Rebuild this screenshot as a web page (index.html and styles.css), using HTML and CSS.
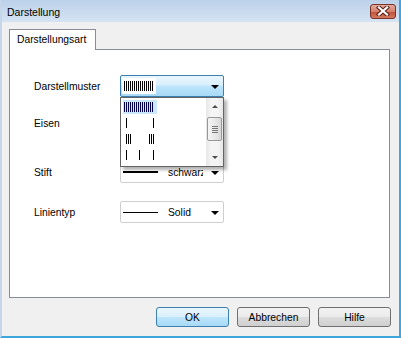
FILE: index.html
```html
<!DOCTYPE html>
<html>
<head lang="de">
    <meta charset="UTF-8">
    <title>Darstellung</title>
    <link rel="stylesheet" href="styles.css">
</head>
<body>
<div class="window">
    <div class="titlebar">
        <span class="title">Darstellung</span>
        <div class="close">
            <svg width="14" height="10" viewBox="0 0 14 10">
                <path d="M3 1.5 L11 8.5 M11 1.5 L3 8.5" stroke="#5b2018" stroke-width="4.2" stroke-linecap="square"/>
                <path d="M3 1.5 L11 8.5 M11 1.5 L3 8.5" stroke="#fff" stroke-width="2.2" stroke-linecap="square"/>
            </svg>
        </div>
    </div>
    <div class="client">
        <div class="tabs">
            <div class="tab">Darstellungsart</div>
        </div>
        <div class="panel">
            <div class="row row-muster">
                <div class="label">Darstellmuster</div>
                <div class="combo combo-active">
                    <div class="pattern-box">
                        <svg width="32" height="10"><path d="M0.5 0V10M2.5 0V10M4.5 0V10M6.5 0V10M8.5 0V10M10.5 0V10M12.5 0V10M14.5 0V10M16.5 0V10M18.5 0V10M20.5 0V10M22.5 0V10M24.5 0V10M26.5 0V10M28.5 0V10" stroke="#000" stroke-width="1" shape-rendering="crispEdges"/></svg>
                    </div>
                    <span class="arrow"></span>
                    <!-- aufgeklappte Liste -->
                    <div class="dropdown">
                        <div class="items">
                            <div class="item selected">
                                <svg width="32" height="10"><path d="M1.5 0V10M3.5 0V10M5.5 0V10M7.5 0V10M9.5 0V10M11.5 0V10M13.5 0V10M15.5 0V10M17.5 0V10M19.5 0V10M21.5 0V10M23.5 0V10M25.5 0V10M27.5 0V10M29.5 0V10" stroke="#000044" stroke-width="1" shape-rendering="crispEdges"/></svg>
                            </div>
                            <div class="item">
                                <svg width="32" height="10"><path d="M3.5 0V10M30.5 0V10" stroke="#000" stroke-width="1" shape-rendering="crispEdges"/></svg>
                            </div>
                            <div class="item">
                                <svg width="32" height="10"><path d="M3.5 0V10M5.5 0V10M7.5 0V10M26.5 0V10M28.5 0V10M30.5 0V10" stroke="#000" stroke-width="1" shape-rendering="crispEdges"/></svg>
                            </div>
                            <div class="item">
                                <svg width="32" height="10"><path d="M3.5 0V10M16.5 0V10M30.5 0V10" stroke="#000" stroke-width="1" shape-rendering="crispEdges"/></svg>
                            </div>
                        </div>
                        <div class="scrollbar">
                            <div class="sb-btn"><span class="sb-up"></span></div>
                            <div class="sb-track">
                                <div class="sb-thumb"><span class="grip"></span></div>
                            </div>
                            <div class="sb-btn"><span class="sb-down"></span></div>
                        </div>
                    </div>
                </div>
            </div>
            <div class="row row-eisen">
                <div class="label">Eisen</div>
                <div class="combo">
                    <span class="line"></span>
                    <span class="value">Eisen</span>
                    <span class="arrow"></span>
                </div>
            </div>
            <div class="row row-stift">
                <div class="label">Stift</div>
                <div class="combo">
                    <span class="line line-thick"></span>
                    <span class="value">schwarz</span>
                    <span class="arrow"></span>
                </div>
            </div>
            <div class="row row-typ">
                <div class="label">Linientyp</div>
                <div class="combo">
                    <span class="line"></span>
                    <span class="value">Solid</span>
                    <span class="arrow"></span>
                </div>
            </div>
        </div>
        <div class="buttons">
            <a class="btn btn-default">OK</a>
            <a class="btn">Abbrechen</a>
            <a class="btn">Hilfe</a>
        </div>
    </div>
</div>
</body>
</html>
```

FILE: styles.css
```css
* {
    margin: 0;
    padding: 0;
}

body {
    background: #fff;
}

.window {
    width: 401px;
    height: 338px;
    box-sizing: border-box;
    background: #f0f0f0;
    border-left: 2px solid #c5d6ea;
    border-right: 2px solid #3da6dc;
    border-bottom: 2px solid #3da6dc;
    display: flex;
    flex-direction: column;
    font-family: "Liberation Sans", Arial, sans-serif;
    font-size: 10.3px;
    color: #000;
}

.titlebar {
    height: 22px;
    display: flex;
    align-items: center;
    justify-content: space-between;
    background: linear-gradient(#bcd1e9, #d5e3f3);
}

.title {
    padding-left: 5px;
    font-size: 10.5px;
    margin-top: 1px;
}

.close {
    width: 26px;
    height: 15px;
    box-sizing: border-box;
    margin-right: 3px;
    border: 1px solid #7a3328;
    border-radius: 3px;
    background: linear-gradient(#e3ab9b, #d4806c 50%, #c24e37 51%, #d27a5f);
    display: flex;
    align-items: center;
    justify-content: center;
}

.client {
    flex: 1;
    display: flex;
    flex-direction: column;
    padding: 7px 8px 0 7px;
}

.tabs {
    display: flex;
    height: 20px;
}

.tab {
    width: 87px;
    height: 21px;
    box-sizing: border-box;
    border: 1px solid #898c95;
    border-bottom: none;
    background: #fff;
    padding-left: 7px;
    line-height: 19px;
    position: relative;
    z-index: 1;
}

.panel {
    width: 381px;
    height: 249px;
    box-sizing: border-box;
    border: 1px solid #898c95;
    background: #fff;
    padding-left: 24px;
    display: flex;
    flex-direction: column;
}

.row {
    display: flex;
    align-items: center;
}

.row-muster {
    margin-top: 25px;
}

.row-eisen {
    margin-top: 15px;
}

.row-stift {
    margin-top: 27px;
}

.row-typ {
    margin-top: 18px;
}

.label {
    width: 86px;
}

.combo {
    width: 104px;
    height: 22px;
    box-sizing: border-box;
    border: 1px solid #cfcfcf;
    border-radius: 2px;
    background: #fff;
    display: flex;
    align-items: center;
    padding-left: 2px;
    position: relative;
}

.combo-active {
    border-color: #3c7fb1;
    background: linear-gradient(#eaf6fd, #d9f0fc 45%, #bee6fd 50%, #a7d9f5);
    padding-left: 1px;
}

.pattern-box {
    width: 34px;
    height: 16px;
    background: #fff;
    display: flex;
    align-items: center;
    padding-left: 2px;
    box-sizing: border-box;
}

.line {
    width: 35px;
    height: 1px;
    background: #000;
}

.line-thick {
    height: 2px;
}

.value {
    margin-left: 10px;
    width: 35px;
    overflow: hidden;
    white-space: nowrap;
}

.arrow {
    margin-left: auto;
    margin-right: 4px;
    margin-top: 2px;
    width: 0;
    height: 0;
    border-left: 4px solid transparent;
    border-right: 4px solid transparent;
    border-top: 4px solid #000;
}

.dropdown {
    position: absolute;
    left: -1px;
    top: 21px;
    width: 104px;
    height: 70px;
    box-sizing: border-box;
    border: 1px solid #646464;
    background: #fff;
    box-shadow: 3px 3px 3px rgba(0, 0, 0, 0.3);
    display: flex;
    z-index: 2;
}

.items {
    flex: 1;
    padding: 1px 0 0 2px;
}

.item {
    height: 16px;
    width: 34px;
    display: flex;
    align-items: center;
}

.item.selected {
    background: #cce8ff;
    height: 14px;
    margin: 1px 0;
}

.scrollbar {
    width: 17px;
    display: flex;
    flex-direction: column;
    background: linear-gradient(to right, #e7e7e7, #f4f4f4 30%, #f4f4f4 70%, #e7e7e7);
}

.sb-btn {
    height: 17px;
    display: flex;
    align-items: center;
    justify-content: center;
}

.sb-up {
    width: 0;
    height: 0;
    border-left: 3px solid transparent;
    border-right: 3px solid transparent;
    border-bottom: 3px solid #4d4d4d;
}

.sb-down {
    width: 0;
    height: 0;
    border-left: 3px solid transparent;
    border-right: 3px solid transparent;
    border-top: 3px solid #4d4d4d;
}

.sb-track {
    flex: 1;
    padding-top: 2px;
}

.sb-thumb {
    margin: 0 1px;
    height: 24px;
    box-sizing: border-box;
    border: 1px solid #989898;
    border-radius: 2px;
    background: linear-gradient(to right, #f4f4f4, #e9e9e9 50%, #d8d8d8);
    display: flex;
    align-items: center;
    justify-content: center;
}

.grip {
    width: 6px;
    height: 7px;
    background: repeating-linear-gradient(#777 0 1px, transparent 1px 2px);
}

.buttons {
    display: flex;
    justify-content: flex-end;
    gap: 8px;
    margin-top: 9px;
}

.btn {
    display: flex;
    align-items: center;
    justify-content: center;
    width: 73px;
    height: 20px;
    box-sizing: border-box;
    border: 1px solid #707070;
    border-radius: 3px;
    background: linear-gradient(#f2f2f2, #ebebeb 50%, #dddddd 51%, #cfcfcf);
    cursor: default;
}

.btn-default {
    border-color: #3c7fb1;
    background: linear-gradient(#eaf6fd, #d9f0fc 50%, #bee6fd 51%, #a7d9f5);
}
```
